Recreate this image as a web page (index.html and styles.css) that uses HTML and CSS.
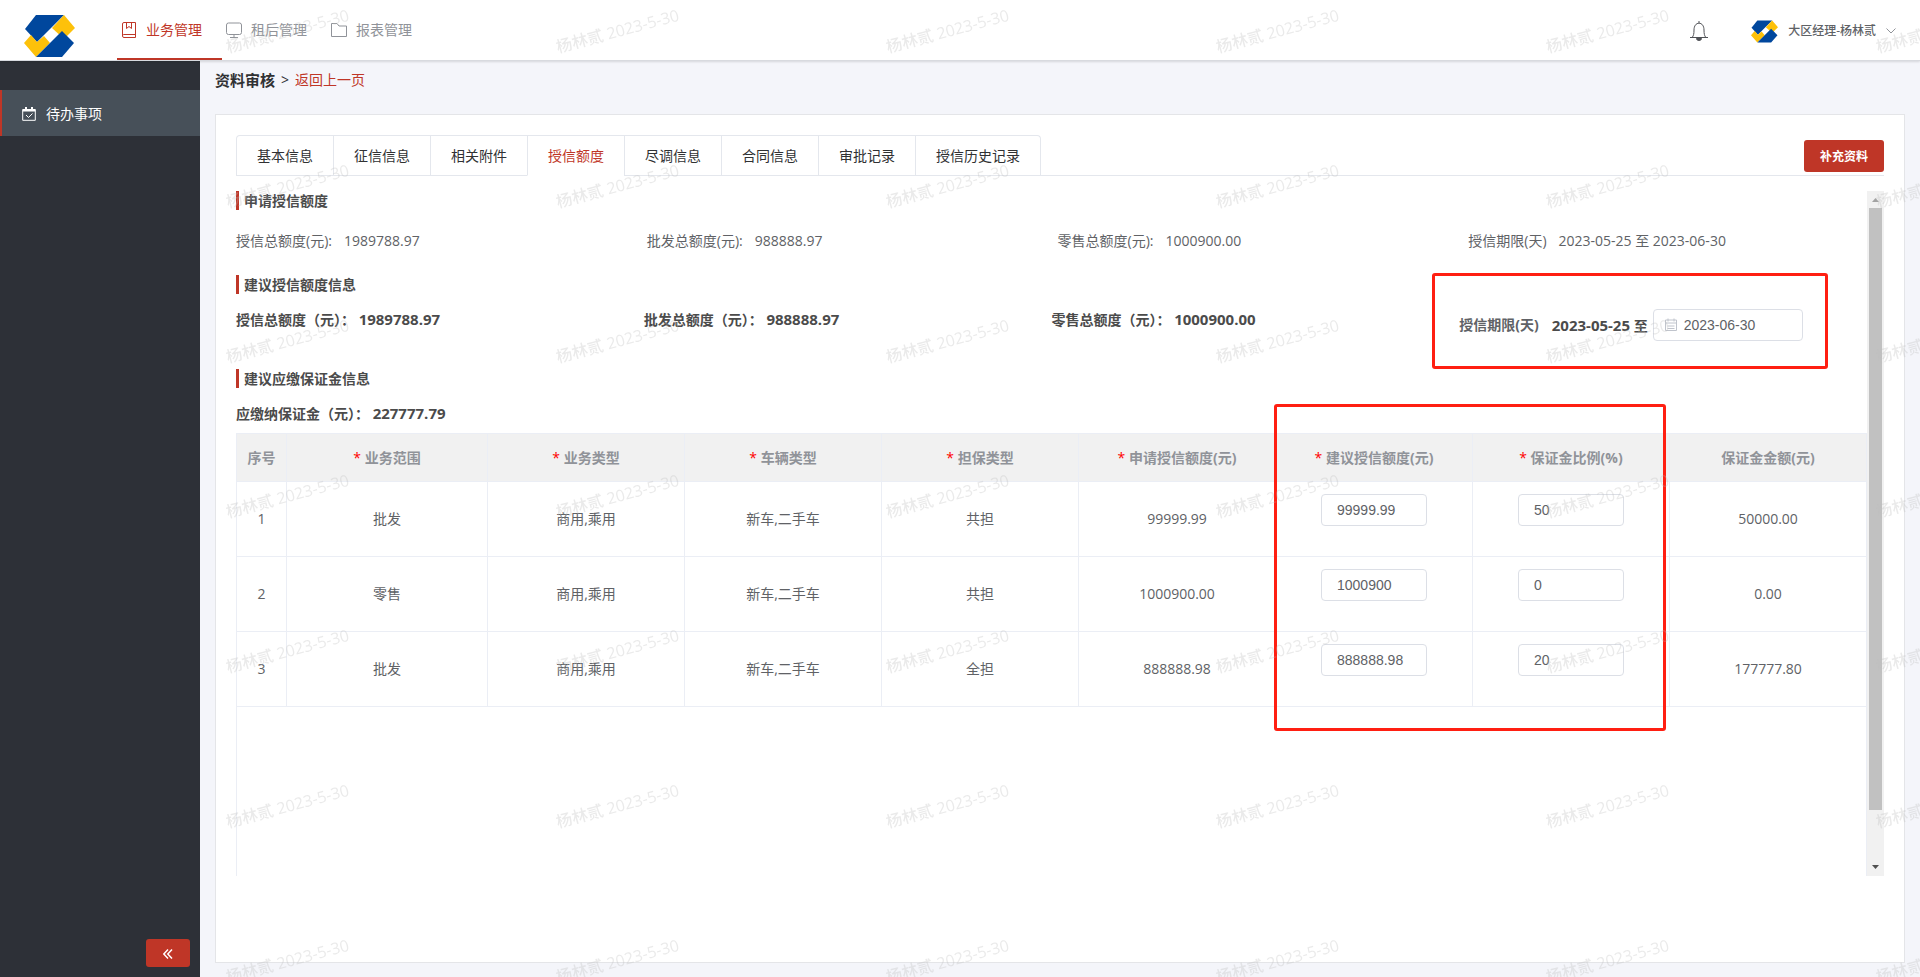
FILE: index.html
```html
<!DOCTYPE html>
<html lang="zh-CN">
<head>
  <meta charset="UTF-8">
  <title>资料审核</title>
  <meta name="viewport" content="width=device-width, initial-scale=1.0">
  <link rel="stylesheet" href="styles.css">
</head>
<body>
  <svg class="defs" width="0" height="0">
    <symbol id="logo" viewBox="0 0 51 42">
      <path fill="#00479d" d="M12 0h28L13 27 1 14z"/>
      <path fill="#fdc10a" d="M40 0l11 13-11 11-12-11z"/>
      <path fill="#fdc10a" d="M0 28l7-8 6 7 7-6 6 7-14 14z"/>
      <path fill="#00479d" d="M38 16l12 12-12 14H12z"/>
    </symbol>
  </svg>

  <header class="header">
    <svg class="logo"><use href="#logo"/></svg>
    <nav class="menu">
      <a href="#" class="menu-item active">
        <svg viewBox="0 0 16 16"><path d="M3 .5h11.500v15H3A1.500 1.500 0 0 1 1.500 14V2A1.500 1.500 0 0 1 3 .5zM1.500 14c0-1 .7-1.500 1.500-1.500h11M5.500.5v6l2.500-2 2.500 2v-6"/></svg>
        业务管理
      </a>
      <a href="#" class="menu-item">
        <svg viewBox="0 0 16 16"><rect x=".5" y="1" width="15" height="11.500" rx="2"/><path d="M8 12.500v3M4 15.500h8"/></svg>
        租后管理
      </a>
      <a href="#" class="menu-item">
        <svg viewBox="0 0 16 16"><path d="M.5 1.500h5.500l2 2.500h7.500v10.500H.5z"/></svg>
        报表管理
      </a>
    </nav>
    <div class="user">
      <svg class="bell" viewBox="0 0 18 20"><path d="M0 16.500h18M2.500 16c1-1.500 1.500-3 1.500-7C4 5 6 2.200 9 2.200S14 5 14 9c0 4 .5 5.500 1.500 7M9 0v2"/><path class="fill" d="M6.500 17.500h5a2.500 2 0 0 1-5 0z"/></svg>
      <svg class="avatar"><use href="#logo"/></svg>
      <span>大区经理-杨林贰</span>
      <svg class="arrow" viewBox="0 0 10 6"><path d="M.5.5L5 5 9.500.5"/></svg>
    </div>
  </header>

  <div class="layout">
    <aside class="sidebar">
      <a href="#" class="side-item">
        <svg viewBox="0 0 14 14"><path d="M.7 2.500h12.600v10.800H.7zM4 8l2.500 2.500 4-4"/><path class="thick" d="M.7 3.500h12.600M4 0v3M10 0v3"/></svg>
        待办事项
      </a>
      <button class="collapse" aria-label="收起菜单">
        <svg viewBox="0 0 10 10"><path d="M5 .5L.8 5 5 9.500M9 .5L4.800 5 9 9.500"/></svg>
      </button>
    </aside>

    <main class="main">
      <div class="crumb"><b>资料审核</b><span>&gt;</span><a href="#">返回上一页</a></div>

      <div class="card">
        <div class="tabs-bar">
          <div class="tabs">
            <button class="tab">基本信息</button>
            <button class="tab">征信信息</button>
            <button class="tab">相关附件</button>
            <button class="tab active">授信额度</button>
            <button class="tab">尽调信息</button>
            <button class="tab">合同信息</button>
            <button class="tab">审批记录</button>
            <button class="tab">授信历史记录</button>
          </div>
          <button class="btn">补充资料</button>
        </div>

        <div class="scroll">
          <div class="content">
            <h3 class="title">申请授信额度</h3>
            <div class="row apply">
              <div><span class="label">授信总额度(元):</span>1989788.97</div>
              <div><span class="label">批发总额度(元):</span>988888.97</div>
              <div><span class="label">零售总额度(元):</span>1000900.00</div>
              <div><span class="label">授信期限(天)</span>2023-05-25 至 2023-06-30</div>
            </div>

            <h3 class="title">建议授信额度信息</h3>
            <div class="row suggest">
              <div>授信总额度（元）： <span class="num">1989788.97</span></div>
              <div>批发总额度（元）： <span class="num">988888.97</span></div>
              <div>零售总额度（元）： <span class="num">1000900.00</span></div>
              <div class="term">
                <label for="endDate">授信期限(天)</label>
                <div><span class="num">2023-05-25</span> 至</div>
                <div class="date">
                  <svg viewBox="0 0 14 14"><path d="M1.500 2h11v10.500h-11zM1.500 5h11M4 .5v3M10 .5v3M3.500 8h7M3.500 10.500h7"/></svg>
                  <input type="text" id="endDate" value="2023-06-30">
                </div>
                <div class="mark mark-term"></div>
              </div>
            </div>

            <h3 class="title">建议应缴保证金信息</h3>
            <div class="total">应缴纳保证金（元）： <span class="num">227777.79</span></div>

            <div class="table-box">
              <table class="table">
                <colgroup>
                  <col class="col-no"><col class="col-scope"><col><col><col><col><col><col><col>
                </colgroup>
                <thead>
                  <tr>
                    <th>序号</th>
                    <th><i>*</i> 业务范围</th>
                    <th><i>*</i> 业务类型</th>
                    <th><i>*</i> 车辆类型</th>
                    <th><i>*</i> 担保类型</th>
                    <th><i>*</i> 申请授信额度(元)</th>
                    <th><i>*</i> 建议授信额度(元)</th>
                    <th><i>*</i> 保证金比例(%)</th>
                    <th>保证金金额(元)</th>
                  </tr>
                </thead>
                <tbody>
                  <tr>
                    <td>1</td><td>批发</td><td>商用,乘用</td><td>新车,二手车</td><td>共担</td><td>99999.99</td>
                    <td><input type="text" aria-label="建议授信额度(元)" value="99999.99"></td>
                    <td><input type="text" aria-label="保证金比例(%)" value="50"></td>
                    <td>50000.00</td>
                  </tr>
                  <tr>
                    <td>2</td><td>零售</td><td>商用,乘用</td><td>新车,二手车</td><td>共担</td><td>1000900.00</td>
                    <td><input type="text" aria-label="建议授信额度(元)" value="1000900"></td>
                    <td><input type="text" aria-label="保证金比例(%)" value="0"></td>
                    <td>0.00</td>
                  </tr>
                  <tr>
                    <td>3</td><td>批发</td><td>商用,乘用</td><td>新车,二手车</td><td>全担</td><td>888888.98</td>
                    <td><input type="text" aria-label="建议授信额度(元)" value="888888.98"></td>
                    <td><input type="text" aria-label="保证金比例(%)" value="20"></td>
                    <td>177777.80</td>
                  </tr>
                </tbody>
              </table>
              <div class="mark mark-table"></div>
            </div>
          </div>

          <div class="scrollbar">
            <svg viewBox="0 0 17 17"><path fill="#a3a3a3" d="M5 11h7L8.500 7z"/></svg>
            <div class="track"><div class="thumb"></div></div>
            <svg viewBox="0 0 17 17"><path fill="#505050" d="M5 6h7l-3.500 4z"/></svg>
          </div>
        </div>
      </div>
    </main>
  </div>

  <!-- watermark over the whole page -->
  <svg class="watermark">
    <pattern id="wm" width="330" height="155" patternUnits="userSpaceOnUse">
      <text x="28" y="53" transform="rotate(-15 28 53)">杨林贰 2023-5-30</text>
    </pattern>
    <rect width="100%" height="100%" fill="url(#wm)"/>
  </svg>
</body>
</html>
```

FILE: styles.css
```css
* {
  box-sizing: border-box;
}
body {
  margin: 0;
  height: 100vh;
  display: flex;
  flex-direction: column;
  font-family: "Open Sans", "Noto Sans CJK SC", sans-serif;
  font-size: 14px;
  line-height: 20px;
  color: #606266;
  background: #f4f5fa;
  overflow: hidden;
}
a {
  text-decoration: none;
}
button, input {
  font-family: inherit;
  font-size: 14px;
}
svg {
  fill: none;
  stroke: currentColor;
  flex-shrink: 0;
}
.defs {
  position: absolute;
}
.defs path, .scrollbar path {
  stroke: none;
}

/* header */
.header {
  height: 61px;
  flex-shrink: 0;
  display: flex;
  align-items: center;
  padding: 0 24px;
  background: #fff;
  border-bottom: 1px solid #d8dadf;
  box-shadow: 0 1px 2px rgba(0,0,0,0.12);
  z-index: 1;
}
.logo {
  width: 51px;
  height: 42px;
  margin: 12px 42px 0 0;
}
.logo path, .avatar path {
  stroke: none;
}
.menu {
  display: flex;
}
.menu-item {
  display: flex;
  align-items: center;
  gap: 9px;
  height: 60px;
  padding: 2px 20px 0 4px;
  color: #909399;
  border-bottom: 2px solid transparent;
}
.menu-item svg {
  width: 16px;
  height: 16px;
}
.menu-item.active {
  color: #bf3627;
  border-color: #bf3627;
}
.user {
  display: flex;
  align-items: center;
  margin-left: auto;
  padding-top: 2px;
  font-size: 12px;
  font-weight: 500;
}
.bell {
  width: 18px;
  height: 20px;
  margin-right: 43px;
  color: #505256;
}
.bell .fill {
  fill: #505256;
}
.avatar {
  width: 27px;
  height: 23px;
  margin-right: 10px;
}
.arrow {
  width: 10px;
  height: 6px;
  margin-left: 10px;
  color: #909399;
}

/* sidebar */
.layout {
  flex: 1;
  display: flex;
  min-height: 0;
}
.sidebar {
  width: 200px;
  flex-shrink: 0;
  display: flex;
  flex-direction: column;
  padding: 29px 0 10px;
  background: #2d3037;
}
.side-item {
  display: flex;
  align-items: center;
  gap: 10px;
  height: 46px;
  padding: 2px 0 0 20px;
  color: #fff;
  background: #475059;
  border-left: 2px solid #bf3627;
}
.side-item svg {
  width: 14px;
  height: 14px;
}
.side-item .thick {
  stroke-width: 2;
}
.collapse {
  width: 44px;
  height: 28px;
  margin: auto 10px 0 auto;
  padding: 0;
  border: 0;
  border-radius: 3px;
  color: #fff;
  background: #bf3627;
}
.collapse svg {
  width: 10px;
  height: 10px;
  stroke-width: 1.5;
}

/* main */
.main {
  flex: 1;
  display: flex;
  flex-direction: column;
  min-width: 0;
  padding: 9px 15px 14px;
}
.crumb {
  display: flex;
  gap: 6px;
  margin-bottom: 24px;
  color: #303133;
}
.crumb b {
  font-size: 15px;
}
.crumb a {
  color: #bf3627;
}
.card {
  flex: 1;
  display: flex;
  flex-direction: column;
  padding: 20px 20px 86px;
  background: #fff;
  border: 1px solid #e4e5e8;
}
.tabs-bar {
  display: flex;
  justify-content: space-between;
  align-items: flex-end;
  margin-bottom: 15px;
  border-bottom: 1px solid #e4e7ed;
}
.tabs {
  display: flex;
  margin-bottom: -1px;
  border: 1px solid #e4e7ed;
  border-bottom: 0;
  border-radius: 4px 4px 0 0;
}
.tab {
  height: 40px;
  padding: 0 20px 2px;
  border: 0;
  border-left: 1px solid #e4e7ed;
  border-bottom: 1px solid #e4e7ed;
  background: none;
  color: #303133;
}
.tab:first-child {
  border-left: 0;
}
.tab.active {
  color: #bf3627;
  border-bottom-color: #fff;
}
.btn {
  width: 80px;
  height: 32px;
  margin-bottom: 3px;
  padding: 0;
  border: 0;
  border-radius: 3px;
  font-size: 12px;
  font-weight: bold;
  color: #fff;
  background: #bf3627;
}

.scroll {
  flex: 1;
  display: flex;
  min-height: 0;
}
.content {
  flex: 1;
  display: flex;
  flex-direction: column;
  min-width: 0;
}
.title {
  margin: 0;
  padding-left: 5px;
  border-left: 3px solid #bf3627;
  font-size: 14px;
  line-height: 19px;
  color: #4b4b4b;
}
.row {
  display: flex;
}
.row > div {
  flex: 1;
}
.apply {
  margin: 21px -12px 24px 0;
}
.label {
  margin-right: 12px;
}
.suggest {
  height: 75px;
  padding-top: 15px;
  font-weight: bold;
  color: #4b4b4b;
}
.num {
  font-size: 15px;
}
.suggest .term {
  position: relative;
  display: flex;
  align-items: center;
  height: 32px;
}
.term label {
  margin-right: 13px;
  color: #606266;
}
.date {
  display: flex;
  align-items: center;
  width: 150px;
  margin-left: 5px;
  border: 1px solid #dcdfe6;
  border-radius: 4px;
  padding-left: 10px;
}
.date svg {
  width: 14px;
  height: 14px;
  color: #c0c4cc;
}
.date input {
  width: 100%;
  height: 30px;
  padding: 0 6px;
  border: 0;
  background: none;
}
.date input, .table input {
  font-family: "Liberation Sans", Arial, sans-serif;
  color: #606266;
}
.total {
  margin: 15px 0 9px;
  font-weight: bold;
  color: #4b4b4b;
}

/* red frames round the editable fields */
.mark {
  position: absolute;
  border: 3px solid #ff1f12;
  border-radius: 3px;
  pointer-events: none;
}
.mark-term {
  top: -36px;
  left: -27px;
  width: 396px;
  height: 96px;
}
.mark-table {
  top: -30px;
  right: 200px;
  width: 392px;
  height: 327px;
}

.table-box {
  position: relative;
  flex: 1;
  border: 1px solid #ebeef5;
  border-bottom: 0;
}
.table {
  width: calc(100% + 1px);
  table-layout: fixed;
  border-collapse: separate;
  border-spacing: 0;
  text-align: center;
}
.col-no {
  width: 50px;
}
.col-scope {
  width: 201px;
}
.table th, .table td {
  padding: 0;
  border-right: 1px solid #ebeef5;
  border-bottom: 1px solid #ebeef5;
}
.table th {
  height: 48px;
  color: #909399;
  background: #f1f1f1;
}
.table i {
  font-style: normal;
  font-weight: normal;
  color: #f00;
}
.table td {
  height: 75px;
}
.table input {
  width: 106px;
  height: 32px;
  margin-bottom: 18px;
  padding: 0 15px;
  border: 1px solid #dcdfe6;
  border-radius: 4px;
  vertical-align: middle;
  background: none;
}

.scrollbar {
  width: 17px;
  display: flex;
  flex-direction: column;
  background: #f1f1f1;
}
.scrollbar svg {
  width: 17px;
  height: 17px;
}
.track {
  flex: 1;
  padding: 0 2px;
}
.thumb {
  height: 92.5%;
  background: #c1c1c1;
}

.watermark {
  position: fixed;
  top: 0;
  left: 200px;
  width: calc(100% - 200px);
  height: 100%;
  z-index: 2;
  stroke: none;
  pointer-events: none;
}
.watermark text {
  font-size: 16px;
  font-weight: 500;
  fill: rgba(190,190,190,0.32);
}
```
